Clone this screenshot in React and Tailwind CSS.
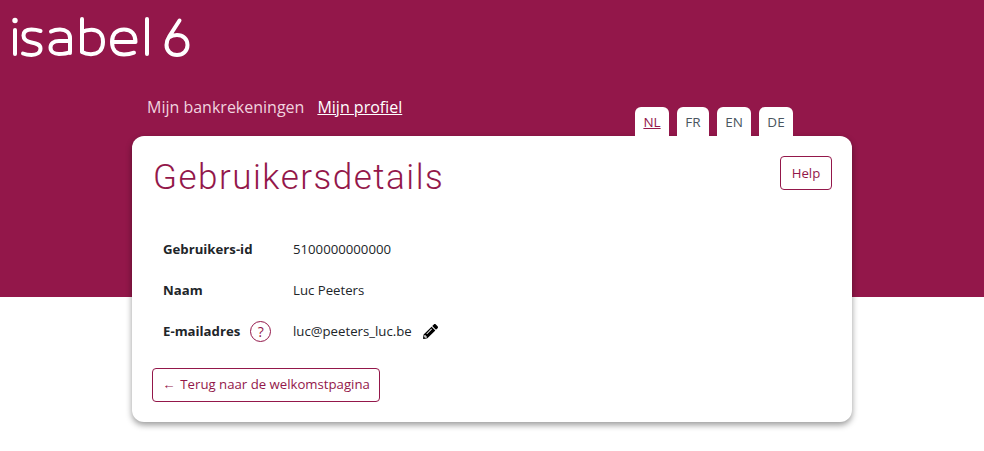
import React from "react";
import { FaPencilAlt } from "react-icons/fa";

const IsabelLogo = () => (
  <svg viewBox="11 15 180 44" className="block h-[44px] w-[180px]" fill="none" stroke="#fff" strokeWidth="4" strokeLinecap="round" strokeLinejoin="round">
    {/* i */}
    <path d="M15 30v24" />
    <circle cx="15" cy="20.500" r="2.700" fill="#fff" stroke="none" />
    {/* s */}
    <path d="M40.500 31c-3-1-6-1.500-9-1.500-5 0-8 2-8 6s3 6 8 7c5 1 9 2 9 6s-3.500 6.500-9 6.500c-3 0-6-.5-8.500-1.500" />
    {/* a */}
    <path d="M51 31.500c2.500-1.300 6-2 9-2 6 0 10 3 10 8.500v15M70 41H59c-5.500 0-8.500 2.500-8.500 6.500s3.500 6.500 8.500 6.500c4.500 0 8.500-.7 11-2" />
    {/* b */}
    <path d="M82 19v33c2.500 1.500 6 2.200 9 2.200 7 0 12-4 12-12.200s-4.500-12.300-11.500-12.300c-3.500 0-7 .8-9.500 2.300" />
    {/* e */}
    <path d="M112 42h23.500c0-8-4-12.500-11.500-12.500S112 34 112 42s4.500 12.500 12 12.500c3.500 0 7-.6 10-1.800" />
    {/* l */}
    <path d="M147 19v35" />
    {/* 6 */}
    <path d="M179.500 20.500L169.500 36c-2 3-3 6-3 9 0 6 4.500 10 10.500 10s10.500-4 10.500-10-4.500-10-10.500-10c-3.500 0-6 1-8 2.500" />
  </svg>
);

const LangTab = ({ label, active, width }) => (
  <a
    href="#"
    className={`flex h-[29px] items-center justify-center rounded-t-md bg-white pt-[2px] text-[13.5px] ${width} ${
      active ? "text-[#93174a] underline" : "text-[#4a5560]"
    }`}
  >
    {label}
  </a>
);

const Row = ({ label, children, extra }) => (
  <div className="flex h-[41px] items-center">
    <div className="flex w-[130px] items-center text-[13.200px] font-bold text-[#212529]">
      {label}
      {extra}
    </div>
    <div className="flex items-center text-[13.200px] text-[#212529]">{children}</div>
  </div>
);

export default function App() {
  return (
    <div
      className="h-[451px] w-full overflow-hidden bg-[linear-gradient(#93174a_297px,#ffffff_297px)]"
      style={{ fontFamily: '"Open Sans", "Noto Sans", sans-serif' }}
    >
      <div className="pl-[11px] pt-[15px]">
        <IsabelLogo />
      </div>

      <div className="mx-[132px] mt-[35px] w-[720px]">
        <div className="flex h-[42px] items-start justify-between">
          <nav className="flex gap-[13px] pl-[15px] text-[16px] leading-[26px]">
            <a href="#" className="text-[#f0d3df]">Mijn bankrekeningen</a>
            <a href="#" className="text-white underline">Mijn profiel</a>
          </nav>
          <div className="mr-[59px] mt-[13px] flex gap-[8px]">
            <LangTab label="NL" width="w-[34px]" active />
            <LangTab label="FR" width="w-[32px]" />
            <LangTab label="EN" width="w-[34px]" />
            <LangTab label="DE" width="w-[34px]" />
          </div>
        </div>

        <main className="h-[286px] rounded-xl bg-white px-5 pt-5 shadow-[0_3px_6px_rgba(0,0,0,0.4)]">
          <div className="flex items-start justify-between">
            <h1
              className="pl-[1px] pt-[2px] text-[35px] font-light leading-[40px] tracking-[1.5px] text-[#93174a]"
              style={{ fontFamily: 'Roboto, sans-serif' }}
            >
              Gebruikersdetails
            </h1>
            <button className="h-[34px] w-[52px] rounded border border-[#93174a] pt-[2px] text-[13.200px] text-[#93174a]">
              Help
            </button>
          </div>

          <div className="mt-[31px] pl-[11px]">
            <Row label="Gebruikers-id">5100000000000</Row>
            <Row label="Naam">Luc Peeters</Row>
            <Row
              label="E-mailadres"
              extra={
                <span className="ml-[10px] flex h-[21px] w-[21px] items-center justify-center rounded-full border border-[#93174a] text-sm font-normal text-[#93174a]">
                  ?
                </span>
              }
            >
              luc@peeters_luc.be
              <FaPencilAlt className="ml-[11px] h-[15px] w-[15px] text-black" />
            </Row>
          </div>

          <a
            href="#"
            className="mt-[16px] flex h-[34px] w-[228px] items-center justify-center rounded border border-[#93174a] text-[13.200px] text-[#93174a]"
          >
            <span className="mr-[5px]">←</span>Terug naar de welkomstpagina
          </a>
        </main>
      </div>
    </div>
  );
}
